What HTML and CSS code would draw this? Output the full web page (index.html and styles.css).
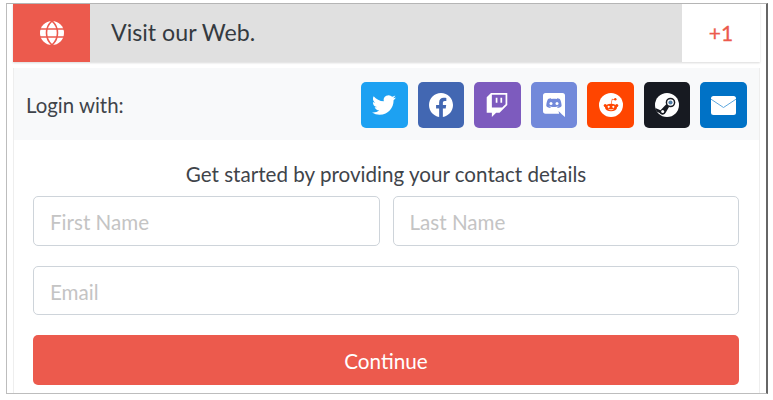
FILE: index.html
```html
<!DOCTYPE html>
<html lang="en">
<head>
<meta charset="utf-8">
<title>Visit our Web</title>
<link rel="stylesheet" href="styles.css">
</head>
<body>
<div class="frame">
  <div class="entry">
    <div class="entry-icon">
      <svg width="24" height="24" viewBox="0 0 24 24"><circle cx="12" cy="12" r="12" fill="#fff"/><g fill="none" stroke="#ec5a4d" stroke-width="1.6"><path d="M0 8h24M0 16h24"/><path d="M12 0C7.5 4 6.5 8 6.5 12s1 8 5.500 12"/><path d="M12 0c4.500 4 5.500 8 5.500 12s-1 8-5.500 12"/></g></svg>
    </div>
    <div class="entry-title">Visit our Web.</div>
    <div class="entry-points">+1</div>
  </div>
  <div class="card">
    <div class="login-row">
      <span class="login-label">Login with:</span>
      <div class="socials">
        <a class="social twitter"><svg width="24" height="24" viewBox="0 0 24 24"><path fill="#fff" d="M23.950 4.570a10 10 0 0 1-2.820.770 4.960 4.960 0 0 0 2.160-2.720 9.900 9.900 0 0 1-3.120 1.180 4.920 4.920 0 0 0-8.380 4.480C7.690 8.090 4.070 6.130 1.640 3.160a4.820 4.820 0 0 0-.67 2.480c0 1.710.87 3.210 2.190 4.100a4.900 4.900 0 0 1-2.230-.62v.06a4.920 4.920 0 0 0 3.950 4.830 5 5 0 0 1-2.210.08 4.940 4.940 0 0 0 4.600 3.420A9.870 9.870 0 0 1 0 19.540a14 14 0 0 0 7.560 2.210c9.050 0 14-7.500 14-13.980 0-.21 0-.42-.02-.63a9.940 9.940 0 0 0 2.410-2.570z"/></svg></a>
        <a class="social facebook"><svg width="24" height="24" viewBox="0 0 24 24"><path fill="#fff" d="M24 12.070C24 5.400 18.630 0 12 0S0 5.400 0 12.070C0 18.100 4.390 23.100 10.130 24v-8.440H7.080v-3.490h3.050V9.410c0-3.020 1.790-4.690 4.530-4.690 1.310 0 2.680.24 2.680.24v2.970h-1.510c-1.490 0-1.960.93-1.960 1.890v2.250h3.330l-.53 3.490h-2.800V24C19.610 23.100 24 18.100 24 12.070z"/></svg></a>
        <a class="social twitch"><svg width="24" height="24" viewBox="0 0 24 24"><path fill="#fff" d="M6 0 1.710 4.290v15.420h5.150V24l4.280-4.290h3.430L22.290 12V0z"/><path fill="#7d5bbe" d="M6.860 1.710h13.710v9.430l-3.430 3.430H6.860z"/><path fill="#fff" d="M17.140 4.710h-1.710v5.150h1.710zm-4.710 0h-1.710v5.150h1.710z"/></svg></a>
        <a class="social discord"><svg width="22" height="24" viewBox="0 0 22 24"><path fill="#fff" d="M2.600 0h16.800A2.600 2.600 0 0 1 22 2.600V24l-3-2.600-1.700-1.600-1.800-1.700.7 2.600H2.600A2.600 2.600 0 0 1 0 18.100V2.600A2.600 2.600 0 0 1 2.600 0z"/><path fill="#7289da" d="M7.800 5.300c-1.800.2-2.900 1-2.900 1-1 1.900-1.600 4.300-1.600 6.800 0 0 1.100 1.800 3.800 1.900l.8-1c-.9-.3-1.500-.7-2-1.200 2.800 1.700 7.200 1.700 10.100 0-.5.500-1.100.9-2 1.200l.8 1c2.700-.1 3.800-1.900 3.800-1.900 0-2.500-.6-4.900-1.600-6.800 0 0-1.100-.8-2.900-1l-.4.600c-1.700-.3-3.400-.3-5.100 0z"/><circle cx="8" cy="10.600" r="1.500" fill="#fff"/><circle cx="14" cy="10.600" r="1.500" fill="#fff"/></svg></a>
        <a class="social reddit"><svg width="24" height="24" viewBox="0 0 24 24"><circle cx="12" cy="12" r="12" fill="#fff"/><g fill="#ff4500"><ellipse cx="12" cy="14.500" rx="6" ry="3.800"/><circle cx="6.200" cy="12.400" r="1.500"/><circle cx="17.800" cy="12.400" r="1.500"/><circle cx="16.300" cy="6.300" r="1.200"/><path d="M12 11 12.900 5.800l3.400.7-.1.600-2.800-.6-.8 4.500z"/></g><circle cx="9.700" cy="13.800" r="1.100" fill="#fff"/><circle cx="14.300" cy="13.800" r="1.100" fill="#fff"/><path d="M9.500 16.100c1.500.9 3.500.9 5 0" fill="none" stroke="#fff" stroke-width=".8"/></svg></a>
        <a class="social steam"><svg width="24" height="24" viewBox="0 0 24 24"><circle cx="12" cy="12" r="12" fill="#fff"/><path fill="#171a21" d="M.4 15 5.500 17.200 11.500 11 14 14 10.800 19.500A3.500 3.500 0 0 1 4.600 20L1.600 18.600A12 12 0 0 1 .4 15z"/><circle cx="15.500" cy="9.500" r="4.800" fill="#171a21"/><circle cx="15.500" cy="9.500" r="3.300" fill="#fff"/><circle cx="15.500" cy="9.500" r="2.100" fill="#4f7da6"/><circle cx="7.700" cy="18.600" r="1.500" fill="#fff"/></svg></a>
        <a class="social mail"><svg width="25" height="19" viewBox="0 0 25 19"><rect width="25" height="19" rx="2.500" fill="#fff"/><path d="M0 3.200 12.500 11.500 25 3.200" fill="none" stroke="#5fa8de" stroke-width="1"/></svg></a>
      </div>
    </div>
    <form class="form">
      <p class="intro">Get started by providing your contact details</p>
      <div class="name-row">
        <input class="field" type="text" placeholder="First Name">
        <input class="field" type="text" placeholder="Last Name">
      </div>
      <input class="field field-email" type="email" placeholder="Email">
      <button class="submit" type="button">Continue</button>
    </form>
  </div>
</div>
</body>
</html>
```

FILE: styles.css
```css
* { box-sizing: border-box; }
html, body { margin: 0; padding: 0; background: #fff; }
body {
  width: 773px;
  height: 400px;
  overflow: hidden;
  font-family: Lato, "Liberation Sans", sans-serif;
  color: #3a3f44;
}
.frame {
  width: 762px;
  height: 391px;
  margin: 3px 0 0 6px;
  padding: 0 6px;
  border: 1px solid #bdbdbd;
  border-right: 2px solid #666;
  border-top-color: #b5b5b5;
  overflow: hidden;
}
.entry {
  display: flex;
  align-items: stretch;
  height: 58px;
  box-shadow: 0 1px 2px rgba(0,0,0,.15);
}
.entry-icon {
  width: 77px;
  background: #ec5a4d;
  display: flex;
  align-items: center;
  justify-content: center;
}
.entry-title {
  flex: 1;
  background: #e0e0e0;
  padding-left: 21px;
  font-size: 23.200px;
  line-height: 57px;
  color: #343a40;
}
.entry-points {
  width: 78px;
  background: #fff;
  color: #ec5a4d;
  font-size: 21px;
  -webkit-text-stroke: 0.3px #ec5a4d;
  line-height: 58px;
  text-align: center;
}
.card {
  margin-top: 6px;
  height: 330px;
  border-left: 1px solid #eee;
  border-right: 1px solid #eee;
}
.login-row {
  display: flex;
  align-items: center;
  justify-content: space-between;
  height: 72px;
  padding: 2px 12px 0;
  background: #f8f9fa;
}
.login-label { font-size: 20.400px; color: #3f444a; }
.socials { display: flex; gap: 10px; }
.social {
  width: 46.570px;
  height: 46px;
  border-radius: 5px;
  display: flex;
  align-items: center;
  justify-content: center;
}
.twitter { background: #1da1f2; }
.facebook { background: #4267b2; }
.twitch { background: #7d5bbe; }
.discord { background: #7289da; }
.reddit { background: #ff4500; }
.steam { background: #171a21; }
.mail { background: #0072c6; }
.form {
  display: flex;
  flex-direction: column;
  padding: 21px 20px 0 19px;
}
.intro {
  margin: 0 0 8px;
  height: 27px;
  font-size: 20.600px;
  line-height: 27px;
  text-align: center;
  color: #3f444a;
}
.name-row { display: flex; gap: 13px; margin-bottom: 20px; }
.name-row .field { flex: 1; min-width: 0; height: 50px; }
.field {
  height: 49px;
  padding: 1px 16px 0;
  border: 1px solid #ced4da;
  border-radius: 5px;
  background: #fff;
  font: 20.600px Lato, "Liberation Sans", sans-serif;
  color: #495057;
  outline: none;
}
.field-email { padding-top: 2px; }
.field::placeholder { color: #c4c4c4; opacity: 1; }
.submit {
  height: 50px;
  margin-top: 20px;
  padding: 2px 0 0;
  border: 0;
  border-radius: 5px;
  background: #ec5a4d;
  color: #fff;
  font: 20.700px Lato, "Liberation Sans", sans-serif;
}
```
